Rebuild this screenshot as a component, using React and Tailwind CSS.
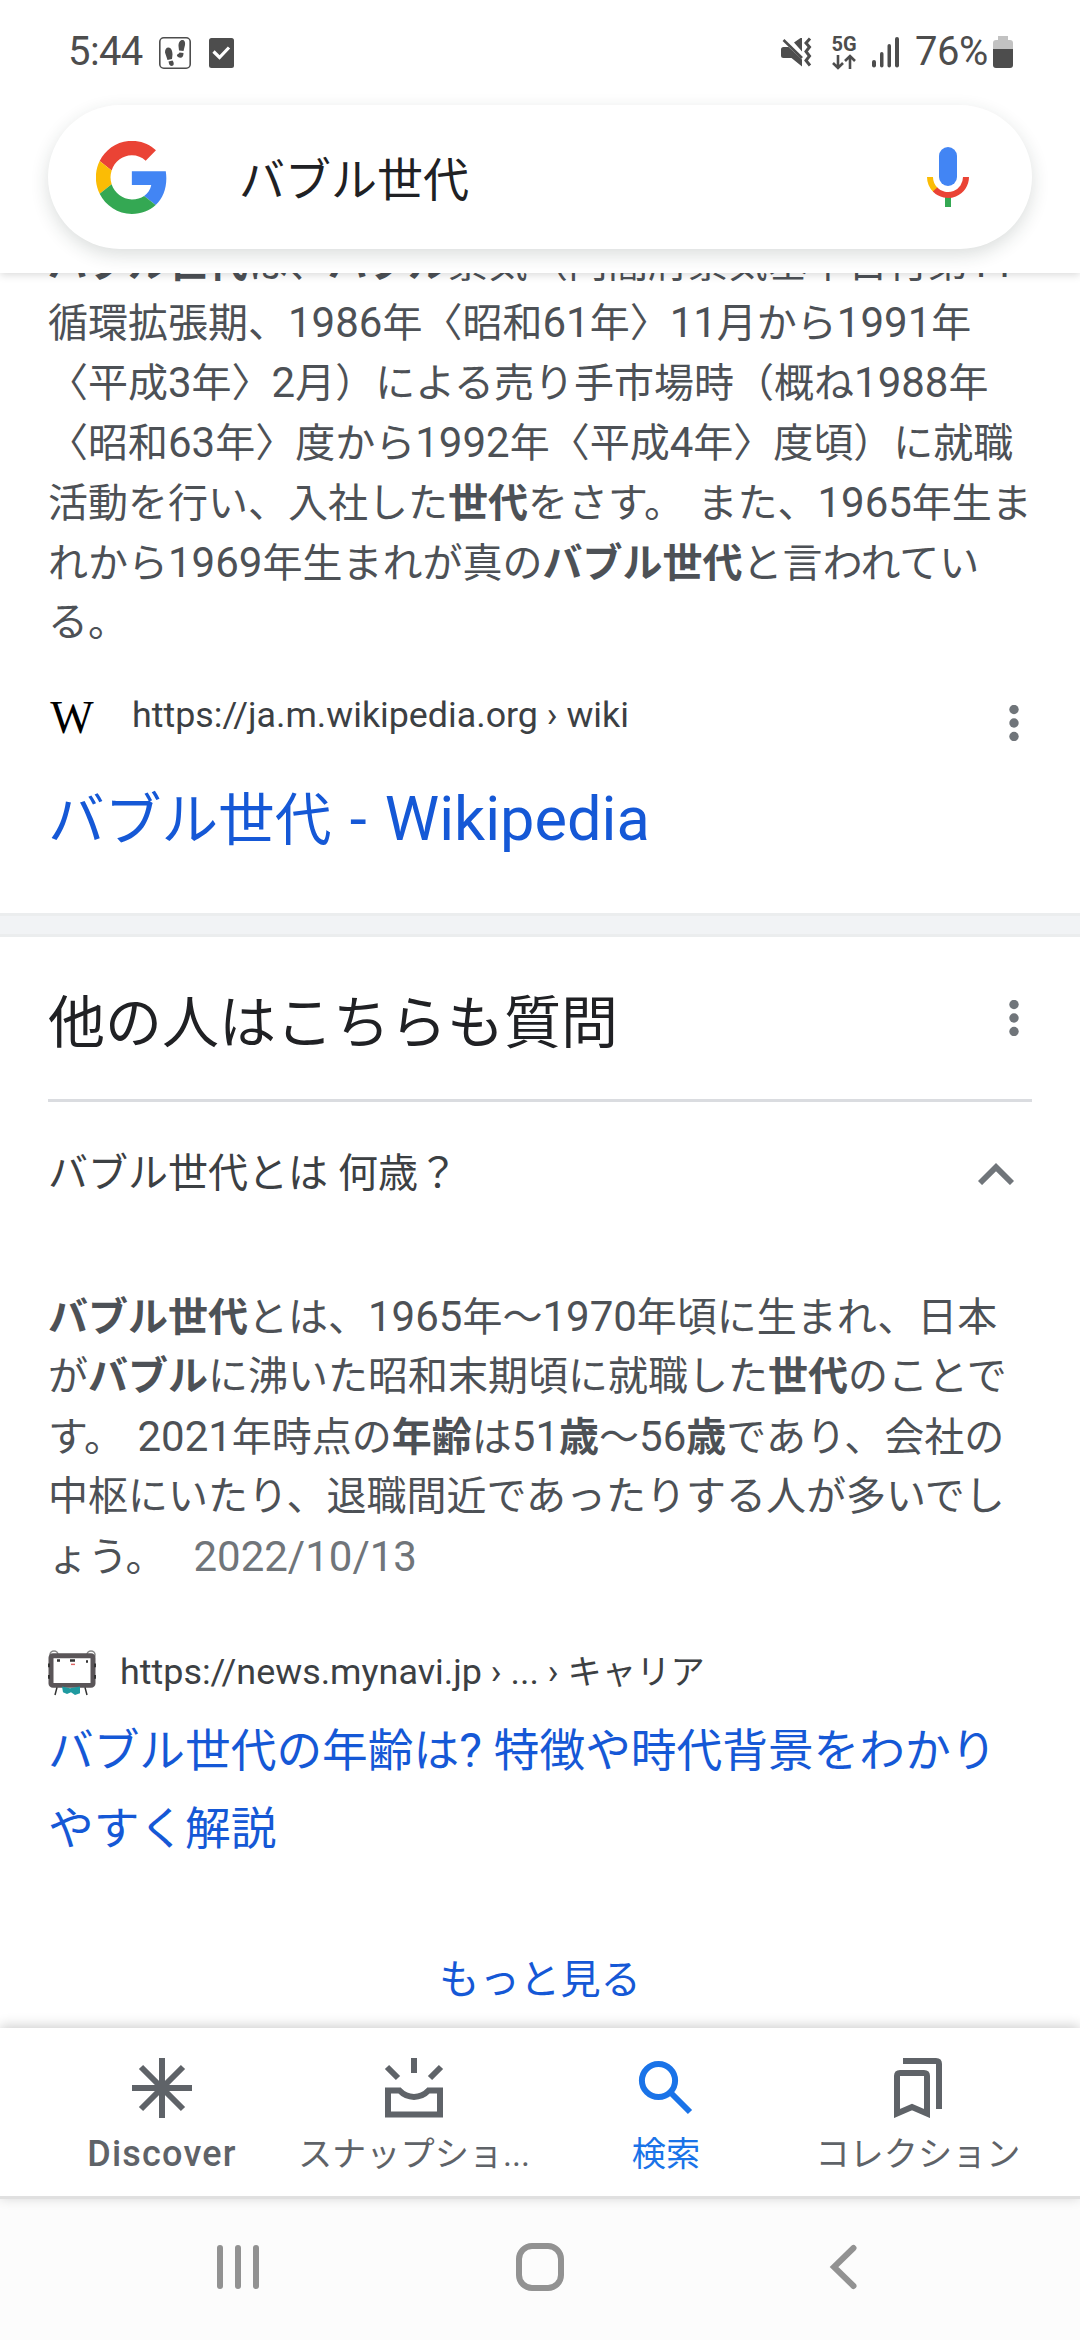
import clsx from "clsx";

const LATIN = /([\x21-\x7e›][\x20-\x7e›]*)/;

// Latin runs are set slightly larger than the Japanese text around them
const Mixed = ({ children }) =>
  children
    .split(LATIN)
    .map((part, i) =>
      i % 2 ? (
        <span key={i} className="text-[1.05em]">
          {part}
        </span>
      ) : (
        part
      )
    );

// Each line is a list of parts, where { b } is a highlighted search term
const Snippet = ({ lines, className, children }) => (
  <div
    className={clsx(
      "text-[40px] leading-[60px] whitespace-pre text-[#4d5156] [word-spacing:3.5px]",
      className
    )}
  >
    {lines.map((parts, i) => (
      <p key={i} className="h-[60px]">
        {parts.map((part, j) =>
          part.b ? (
            <b key={j} className="font-bold">
              {part.b}
            </b>
          ) : (
            <Mixed key={j}>{part}</Mixed>
          )
        )}
        {i === lines.length - 1 && children}
      </p>
    ))}
  </div>
);

const wikiLines = [
  [{ b: "バブル世代" }, "は、", { b: "バブル" }, "景気（内閣府景気基準日付第11"],
  ["循環拡張期、1986年〈昭和61年〉11月から1991年"],
  ["〈平成3年〉2月）による売り手市場時（概ね1988年"],
  ["〈昭和63年〉度から1992年〈平成4年〉度頃）に就職"],
  ["活動を行い、入社した", { b: "世代" }, "をさす。 また、1965年生ま"],
  ["れから1969年生まれが真の", { b: "バブル世代" }, "と言われてい"],
  ["る。"],
];

const answerLines = [
  [{ b: "バブル世代" }, "とは、1965年〜1970年頃に生まれ、日本"],
  ["が", { b: "バブル" }, "に沸いた昭和末期頃に就職した", { b: "世代" }, "のことで"],
  [
    "す。 2021年時点の",
    { b: "年齢" },
    "は51",
    { b: "歳" },
    "〜56",
    { b: "歳" },
    "であり、会社の",
  ],
  ["中枢にいたり、退職間近であったりする人が多いでし"],
  ["ょう。"],
];

const StatusBar = () => (
  <div className="flex h-[105px] items-start text-[40px] leading-[48px] text-[#4d4d4d]">
    <span className="mt-[28px] ml-[68px] w-[91px] tracking-[-0.6px]">5:44</span>
    <svg className="mt-[37px] h-8 w-8" viewBox="0 0 32 32" fill="currentColor">
      <rect x="0.8" y="0.8" width="30.4" height="30.4" rx="4" fill="none" stroke="currentColor" strokeWidth="1.6" />
      <path d="M19.5 9c0-3.500 1.500-6 4-6 2 0 3 2 2.500 5l-1.500 6-4.500-.5zM20.500 15.500l4 .5c0 3-1 5-3.500 4.800-2.300-.3-3.500-2-3-3 1-1 2-1 2.500-2.300z" />
      <path d="M6 15.500c0-3 1-5 3.500-5s4 3 4 7l-.5 4.500-4.500 1zM9.500 24.500l4-1c1.500 1.500 1.800 5 0 5.300-2 .5-3.500-1-3.500-2.300z" />
    </svg>
    <svg className="mt-[38px] ml-[18px] h-[30px] w-[25px]" viewBox="0 0 25 30">
      <rect width="25" height="30" rx="2.500" fill="currentColor" />
      <path d="M4.500 13.500l6 6L20 9.500" fill="none" stroke="white" strokeWidth="3.200" />
    </svg>

    <svg className="mt-[37px] ml-auto h-8 w-8" viewBox="0 0 32 32" fill="currentColor">
      <path d="M0 12.500Q0 10 2.500 10h5L21 22.500v7L10.500 21h-8Q0 21 0 18.500zM13 5.500L19.500 1H21v13.500z" />
      <path d="M2.500 3L21 21" stroke="currentColor" strokeWidth="2.600" />
      <path
        d="M29 1.500l-4 4.500 3.500 4-3.500 4.500 3.500 4.500-3.500 4.500 4 5"
        fill="none"
        stroke="currentColor"
        strokeWidth="3"
      />
    </svg>
    <div className="mt-[35px] ml-[18px] flex w-[26px] flex-col items-center">
      <span className="h-[17px] text-[20px] leading-[18px] font-bold">5G</span>
      <svg className="mt-[2px] h-[16px] w-[24px]" viewBox="0 0 24 16" fill="none" stroke="currentColor" strokeWidth="2.600">
        <path d="M6 1v13M1 9l5 5 5-5M18 15V2M13 7l5-5 5 5" />
      </svg>
    </div>
    <svg className="mt-[37px] ml-[15px] h-[31px] w-[28px]" viewBox="0 0 28 31" fill="currentColor">
      <rect x="0" y="23" width="4" height="7.500" rx="2" />
      <rect x="8" y="15" width="3.500" height="15.500" rx="1.750" />
      <rect x="15.500" y="7" width="3.500" height="23.500" rx="1.750" />
      <rect x="23" y="0" width="4" height="30.500" rx="2" />
    </svg>
    <span className="mt-[28px] ml-[15px] w-[78px] tracking-[-0.5px]">76%</span>
    <svg className="mt-[36px] mr-[67px] h-[33px] w-[20px]" viewBox="0 0 20 33">
      <path d="M5 0h10v4h2q3 0 3 3v7H0V7q0-3 3-3h2z" fill="#c2c2c2" />
      <path d="M0 13h20v16q0 3-3 3H3q-3 0-3-3z" fill="currentColor" />
    </svg>
  </div>
);

const GoogleLogo = () => (
  <svg className="h-[73px] w-[71px]" viewBox="2 2 44 44.600" preserveAspectRatio="none">
    <path fill="#EA4335" d="M24 9.500c3.540 0 6.710 1.220 9.210 3.600l6.850-6.850C35.900 2.380 30.470 0 24 0 14.620 0 6.510 5.380 2.560 13.220l7.980 6.190C12.430 13.720 17.740 9.500 24 9.500z" transform="translate(1.900 1.900) scale(.93)" />
    <path fill="#4285F4" d="M46.980 24.550c0-1.570-.15-3.090-.38-4.550H24v9.020h12.940c-.58 2.960-2.260 5.480-4.780 7.180l7.730 6c4.510-4.180 7.090-10.360 7.090-17.650z" transform="translate(1.900 1.900) scale(.93)" />
    <path fill="#FBBC05" d="M10.530 28.590c-.48-1.450-.76-2.990-.76-4.590s.27-3.140.76-4.590l-7.980-6.190C.92 16.460 0 20.120 0 24c0 3.880.92 7.540 2.560 10.780l7.970-6.190z" transform="translate(1.900 1.900) scale(.93)" />
    <path fill="#34A853" d="M24 48c6.480 0 11.930-2.130 15.890-5.810l-7.730-6c-2.150 1.450-4.920 2.300-8.160 2.300-6.260 0-11.570-4.220-13.470-9.910l-7.980 6.190C6.510 42.620 14.620 48 24 48z" transform="translate(1.900 1.900) scale(.93)" />
  </svg>
);

const MicIcon = () => (
  <svg className="h-[60px] w-[42px]" viewBox="0 0 42 60" fill="none" strokeWidth="6">
    <rect x="12" y="0" width="18" height="39" rx="9" fill="#4285f4" />
    <path d="M21 50v10" stroke="#34a853" />
    <path d="M3 30a18 18 0 0 0 5.600 13" stroke="#fbbc05" />
    <path d="M8 42.500A18 18 0 0 0 39 30" stroke="#ea4335" />
  </svg>
);

const Header = () => (
  <header className="relative z-10 h-[273px] shrink-0 bg-white shadow-[0_2px_8px_rgba(0,0,0,0.15)]">
    <StatusBar />
    <div className="mx-12 flex h-36 items-center rounded-full bg-white pr-[63px] pl-12 shadow-[0_6px_18px_rgba(32,50,45,0.16)]">
      <GoogleLogo />
      <span className="mt-[6px] ml-[72px] flex-1 text-[46px] leading-[60px] text-[#202124]">
        バブル世代
      </span>
      <MicIcon />
    </div>
  </header>
);

const Kebab = ({ className }) => (
  <svg className={clsx("h-9 w-9 shrink-0", className)} viewBox="0 0 36 36" fill="#70757a">
    <circle cx="18" cy="4.500" r="4.700" />
    <circle cx="18" cy="18" r="4.700" />
    <circle cx="18" cy="31.500" r="4.700" />
  </svg>
);

const MynaviIcon = () => (
  <svg className="h-[46px] w-[48px]" viewBox="0 0 48 48" fill="none" preserveAspectRatio="none">
    <circle cx="6" cy="5" r="4" stroke="#888" strokeWidth="1.500" />
    <circle cx="43" cy="5" r="4" stroke="#888" strokeWidth="1.500" />
    <rect x="3" y="6" width="42" height="31" rx="2" fill="white" stroke="#5a5558" strokeWidth="5" />
    <path d="M1 14v4M1 26v4M47 14v4M47 26v4" stroke="#333" strokeWidth="2" />
    <path d="M9 11h3M38 12h2M22 11h5" stroke="#333" strokeWidth="2.500" />
    <path d="M23 15h4" stroke="#d66" strokeWidth="1.500" />
    <path d="M14 38l8 2 10-2v7l-5 2-4-3-4 2-4-2z" fill="#1f9aa0" />
    <path d="M9 39l-2 8M37 39l2 8" stroke="#333" strokeWidth="1.500" />
  </svg>
);

const WikiResult = () => (
  <section className="h-[640px] shrink-0 px-12">
    <Snippet lines={wikiLines} className="-mt-[40px]" />
    <div className="mt-[30px] flex h-[100px] items-start">
      <span className="mt-[13px] flex h-[44px] w-[48px] items-center justify-center font-['Liberation_Serif',serif] text-[46px] leading-none text-black">
        W
      </span>
      <span className="mt-[8px] ml-[36px] flex-1 text-[35.8px] leading-[48px] whitespace-pre text-[#3c4043]">
        https://ja.m.wikipedia.org › wiki
      </span>
      <Kebab className="mt-[22px]" />
    </div>
    <h3 className="text-[56.7px] leading-[72px] whitespace-pre text-[#1558d6]">
      バブル世代
      <span className="text-[61.3px] [word-spacing:3px]"> - Wikipedia</span>
    </h3>
  </section>
);

const PeopleAlsoAsk = () => (
  <section className="px-12">
    <div className="flex h-[162px] items-center justify-between">
      <h2 className="mt-[12px] text-[57px] leading-[72px] text-[#202124]">
        他の人はこちらも質問
      </h2>
      <Kebab />
    </div>
    <div className="flex h-[147px] items-center justify-between border-t-[3px] border-[#dadce0] pr-[18px]">
      <span className="text-[40px] leading-[60px] whitespace-pre text-[#3c4043]">
        バブル世代とは 何歳？
      </span>
      <svg className="h-[22px] w-9" viewBox="0 0 36 22" fill="none" stroke="#70757a" strokeWidth="5.800">
        <path d="M2 20L18 4.200 34 20" />
      </svg>
    </div>
    <Snippet lines={answerLines} className="mt-[41px]">
      <span className="text-[42px] text-[#70757a]">{"\u00a0 2022/10/13"}</span>
    </Snippet>
    <div className="mt-[58px] flex h-[56px] items-center text-[35.9px] leading-[48px] text-[#3c4043]">
      <MynaviIcon />
      <span className="-mt-[2px] ml-[24px] whitespace-pre">
        https://news.mynavi.jp › ... › <span className="text-[34.3px]">キャリア</span>
      </span>
    </div>
    <h3 className="mt-[11px] text-[45.7px] leading-[78px] whitespace-pre text-[#1558d6]">
      <Mixed>バブル世代の年齢は? 特徴や時代背景をわかり</Mixed>
      <br />
      やすく解説
    </h3>
    <p className="mt-[82px] text-center text-[40.4px] leading-[60px] text-[#1558d6]">
      もっと見る
    </p>
  </section>
);

const DiscoverIcon = () => (
  <path d="M30 0v60M0 30h60M9 9l42 42M51 9L9 51" />
);

const SnapshotIcon = () => (
  <>
    <path d="M30 0v15M3 9l11 11M57 9L46 20" />
    <path d="M4 32.500h11.500c8 8.500 21 8.500 29 0H56v24H4z" />
  </>
);

const SearchIcon = () => (
  <>
    <circle cx="22.500" cy="22.500" r="16.600" />
    <path d="M34 34l20 20" />
  </>
);

const CollectionsIcon = () => (
  <>
    <path d="M9 55.500V18q0-3 3-3h24q3 0 3 3v37.500l-15-6.500z" />
    <path d="M15 3h33q3 0 3 3v45" />
  </>
);

const tabs = [
  { label: "Discover", Icon: DiscoverIcon, text: "text-[36px] font-medium tracking-[1.200px]" },
  { label: "スナップショ...", Icon: SnapshotIcon, text: "text-[34.200px]" },
  { label: "検索", Icon: SearchIcon, text: "text-[34.200px]", active: true },
  { label: "コレクション", Icon: CollectionsIcon, text: "text-[34.200px]" },
];

const TabBar = () => (
  <nav className="relative z-10 grid h-[171px] shrink-0 grid-cols-4 border-b-[3px] border-[#e0e0e0] bg-white px-9 shadow-[0_-2px_12px_rgba(0,0,0,0.2)]">
    {tabs.map(({ label, Icon, text, active }) => (
      <div
        key={label}
        className={clsx(
          "flex flex-col items-center pt-[30px]",
          active ? "text-[#1a73e8]" : "text-[#5f6368]"
        )}
      >
        <svg className="h-[60px] w-[60px]" viewBox="0 0 60 60" fill="none" stroke="currentColor" strokeWidth="6">
          <Icon />
        </svg>
        <span className={clsx("mt-[12px] leading-[48px] whitespace-nowrap", text)}>
          {label}
        </span>
      </div>
    ))}
  </nav>
);

const SystemNav = () => (
  <div className="flex h-[141px] shrink-0 items-start bg-[#fcfcfc] pt-[44px]">
    <svg className="ml-[214px] h-[48px] w-[48px]" viewBox="0 0 48 48" stroke="#929292" strokeWidth="6" strokeLinecap="round">
      <path d="M6 5v38M24 5v38M42 5v38" />
    </svg>
    <div className="ml-[254px] h-[48px] w-[48px] rounded-[16px] border-[6px] border-[#929292]" />
    <svg className="ml-[254px] h-[48px] w-[48px]" viewBox="0 0 48 48" fill="none" stroke="#929292" strokeWidth="6" strokeLinecap="round">
      <path d="M35.500 5L16 24l19.500 19" />
    </svg>
  </div>
);

const App = () => (
  <div className="flex h-[2340px] w-[1080px] flex-col overflow-hidden bg-white font-[Roboto,'Noto_Sans_CJK_JP',sans-serif]">
    <Header />
    <main className="flex min-h-0 flex-1 flex-col overflow-hidden">
      <WikiResult />
      <div className="h-6 shrink-0 border-y-[3px] border-[#ebedee] bg-[#f1f3f5]" />
      <PeopleAlsoAsk />
    </main>
    <TabBar />
    <SystemNav />
  </div>
);

export default App;
